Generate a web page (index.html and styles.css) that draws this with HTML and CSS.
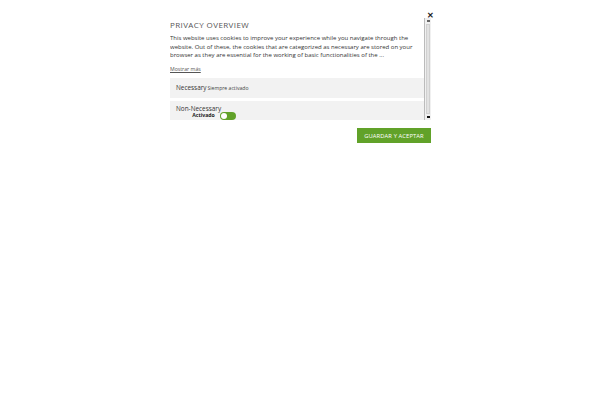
FILE: index.html
```html
<!DOCTYPE html>
<html lang="es">
<head>
    <meta charset="UTF-8">
    <meta name="viewport" content="width=device-width, initial-scale=1.0">
    <title>Privacy Overview</title>
    <link rel="stylesheet" href="styles.css">
</head>
<body>
    <div class="modal">
        <span class="close">&#10005;</span>
        <div class="modal-body">
            <div class="scroll-area">
                <h4 class="title">PRIVACY OVERVIEW</h4>
                <p class="intro">This website uses cookies to improve your experience while you navigate through the website. Out of these, the cookies that are categorized as necessary are stored on your browser as they are essential for the working of basic functionalities of the ...</p>
                <a class="more">Mostrar más</a>
                <div class="cookie-row">
                    <span class="cookie-name">Necessary</span>
                    <span class="always">Siempre activado</span>
                </div>
                <div class="cookie-row cookie-row-toggle">
                    <span class="cookie-name">Non-Necessary</span>
                    <div class="switch-wrap">
                        <span class="switch-label">Activado</span>
                        <span class="switch"><span class="knob"></span></span>
                    </div>
                </div>
            </div>
            <div class="scrollbar">
                <span class="arrow arrow-up"></span>
                <span class="thumb"></span>
                <span class="arrow arrow-down"></span>
            </div>
        </div>
        <div class="footer">
            <button class="accept">GUARDAR Y ACEPTAR</button>
        </div>
    </div>
</body>
</html>
```

FILE: styles.css
```css
body {
    margin: 0;
    background: #fff;
    font-family: "Open Sans", Arial, sans-serif;
    color: #333;
}

.modal {
    position: relative;
    width: 261px;
    margin-left: 170px;
    padding-top: 18px;
}

.close {
    position: absolute;
    top: 11px;
    right: -3px;
    font-size: 8px;
    line-height: 8px;
    color: #222;
    font-weight: bold;
}

.modal-body {
    display: flex;
    height: 102px;
}

.scroll-area {
    flex: 1;
    overflow: hidden;
    padding-top: 1px;
    font-size: 6px;
}

.title {
    margin: 0 0 3px;
    font-size: 8px;
    font-weight: normal;
    letter-spacing: 0.4px;
    color: #555;
    line-height: 12px;
}

.intro {
    margin: 0 0 5px;
    padding-right: 4px;
    font-size: 6px;
    line-height: 8.5px;
    color: #333;
}

.more {
    display: block;
    font-size: 5.2px;
    line-height: 8px;
    color: #555;
    text-decoration: underline;
    margin-bottom: 5px;
}

.cookie-row {
    display: flex;
    align-items: center;
    background: #f2f2f2;
    height: 20px;
    padding: 0 6px;
    margin-bottom: 3px;
}

.cookie-name {
    font-size: 6.4px;
    color: #333;
    margin-right: 1px;
    line-height: 8px;
}

.always {
    font-size: 5.1px;
    color: #444;
}

.cookie-row-toggle {
    align-items: flex-start;
    padding-top: 4px;
    height: 18px;
}

.switch-wrap {
    display: flex;
    align-items: center;
    margin-left: -30px;
    margin-top: 7px;
}

.switch-label {
    font-size: 5.2px;
    font-weight: bold;
    color: #222;
    margin-right: 5px;
    line-height: 7px;
}

.switch {
    position: relative;
    display: inline-block;
    width: 16px;
    height: 8px;
    border-radius: 4px;
    background: #61a229;
}

.knob {
    position: absolute;
    left: 1px;
    top: 1px;
    width: 6px;
    height: 6px;
    border-radius: 50%;
    background: #fff;
}

.scrollbar {
    display: flex;
    flex-direction: column;
    width: 6px;
    border-left: 1px solid #bbb;
    background: #f0f0f0;
}

.arrow {
    height: 6px;
    display: flex;
    align-items: center;
    justify-content: center;
}

.arrow-up::after {
    content: "";
    width: 3px;
    height: 2px;
    background: #666;
}

.arrow-down::after {
    content: "";
    width: 3px;
    height: 2px;
    background: #111;
}

.thumb {
    flex: 1;
    margin: 0 1px;
    background: #e2e2e2;
    border: 1px solid #d0d0d0;
}

.footer {
    display: flex;
    justify-content: flex-end;
    margin-top: 8px;
}

.accept {
    background: #61a229;
    color: #fff;
    border: none;
    font-family: "Open Sans", Arial, sans-serif;
    font-size: 5.8px;
    letter-spacing: 0.1px;
    width: 74px;
    height: 15px;
    padding: 0;
}
```
